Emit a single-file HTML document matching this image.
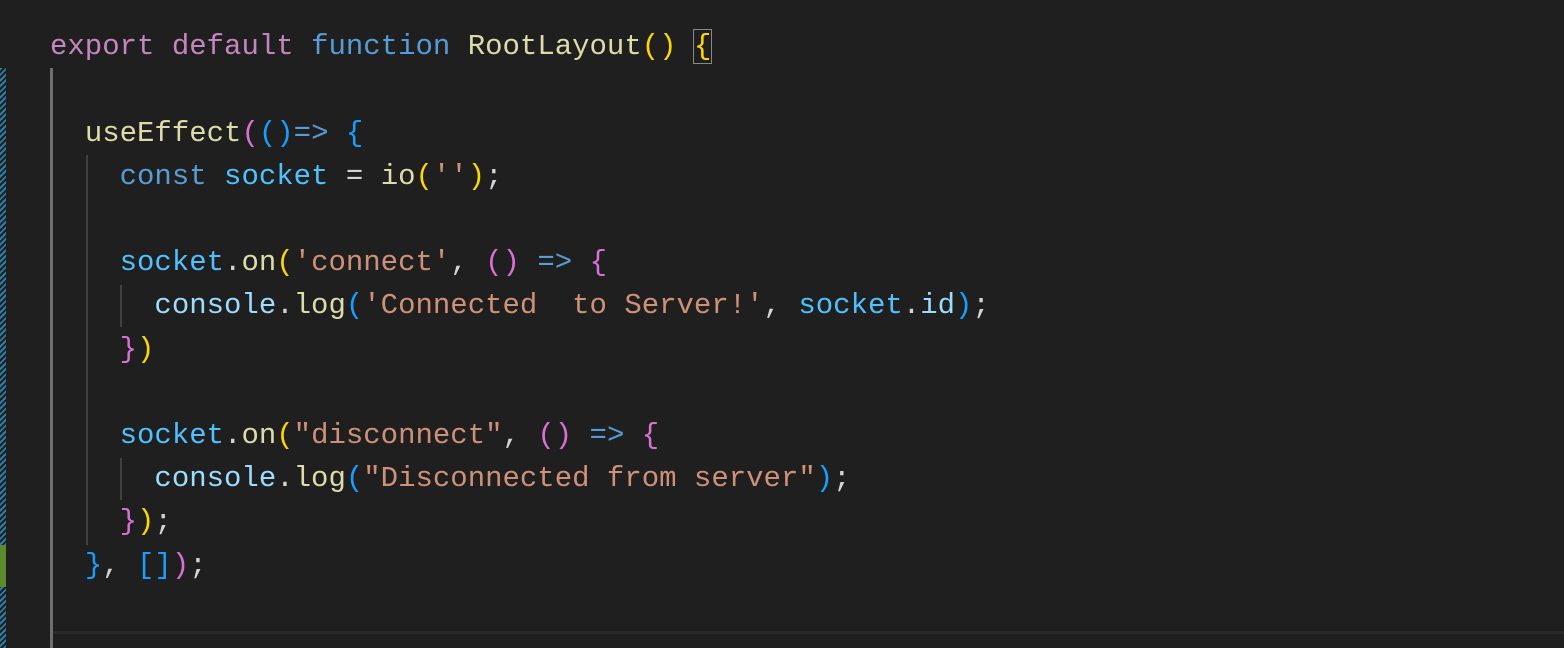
<html><head><style>
body{margin:0;width:1564px;height:648px;background:#1f1f1f;overflow:hidden;position:relative;font-family:"Liberation Mono",monospace;font-size:29px;}
.l{position:absolute;left:50px;white-space:pre;line-height:43.3px;height:43.3px;color:#d4d4d4}
.k{color:#c586c0}.f{color:#569cd6}.y{color:#dcdcaa}.g{color:#ffd700}.p{color:#da70d6}.b{color:#179fff}.v{color:#9cdcfe}.c{color:#4fc1ff}.s{color:#ce9178}
.box{outline:1.5px solid #888;}
.guide{position:absolute;width:2px;background:#404040}
</style></head><body>
<div style="position:absolute;left:0;top:68px;width:6px;height:580px;background:repeating-linear-gradient(135deg,#2a7ea8 0 2px,#1f1f1f 2px 4px)"></div>
<div style="position:absolute;left:0;top:545px;width:6px;height:42px;background:#5a8a2a"></div>
<div class="guide" style="left:50px;top:68px;height:580px;background:#6e6e6e;width:3px"></div>
<div class="guide" style="left:86px;top:155px;height:390px"></div>
<div class="guide" style="left:120px;top:285px;height:42px"></div>
<div class="guide" style="left:120px;top:458px;height:42px"></div>
<div style="position:absolute;left:53px;top:631px;width:1511px;height:3px;background:#2a2a2a"></div>
<div class="l" style="top:25px"><span class="k">export</span> <span class="k">default</span> <span class="f">function</span> <span class="y">RootLayout</span><span class="g">()</span> <span class="g box">{</span></div>
<div class="l" style="top:112px">  <span class="y">useEffect</span><span class="p">(</span><span class="b">()</span><span class="f">=&gt;</span> <span class="b">{</span></div>
<div class="l" style="top:155px">    <span class="f">const</span> <span class="c">socket</span> = <span class="y">io</span><span class="g">(</span><span class="s">''</span><span class="g">)</span>;</div>
<div class="l" style="top:241px">    <span class="c">socket</span>.<span class="y">on</span><span class="g">(</span><span class="s">'connect'</span>, <span class="p">()</span> <span class="f">=&gt;</span> <span class="p">{</span></div>
<div class="l" style="top:284px">      <span class="v">console</span>.<span class="y">log</span><span class="b">(</span><span class="s">'Connected  to Server!'</span>, <span class="c">socket</span>.<span class="v">id</span><span class="b">)</span>;</div>
<div class="l" style="top:328px">    <span class="p">}</span><span class="g">)</span></div>
<div class="l" style="top:414px">    <span class="c">socket</span>.<span class="y">on</span><span class="g">(</span><span class="s">"disconnect"</span>, <span class="p">()</span> <span class="f">=&gt;</span> <span class="p">{</span></div>
<div class="l" style="top:457px">      <span class="v">console</span>.<span class="y">log</span><span class="b">(</span><span class="s">"Disconnected from server"</span><span class="b">)</span>;</div>
<div class="l" style="top:500px">    <span class="p">}</span><span class="g">)</span>;</div>
<div class="l" style="top:544px">  <span class="b">}</span>, <span class="b">[]</span><span class="p">)</span>;</div>
</body></html>
